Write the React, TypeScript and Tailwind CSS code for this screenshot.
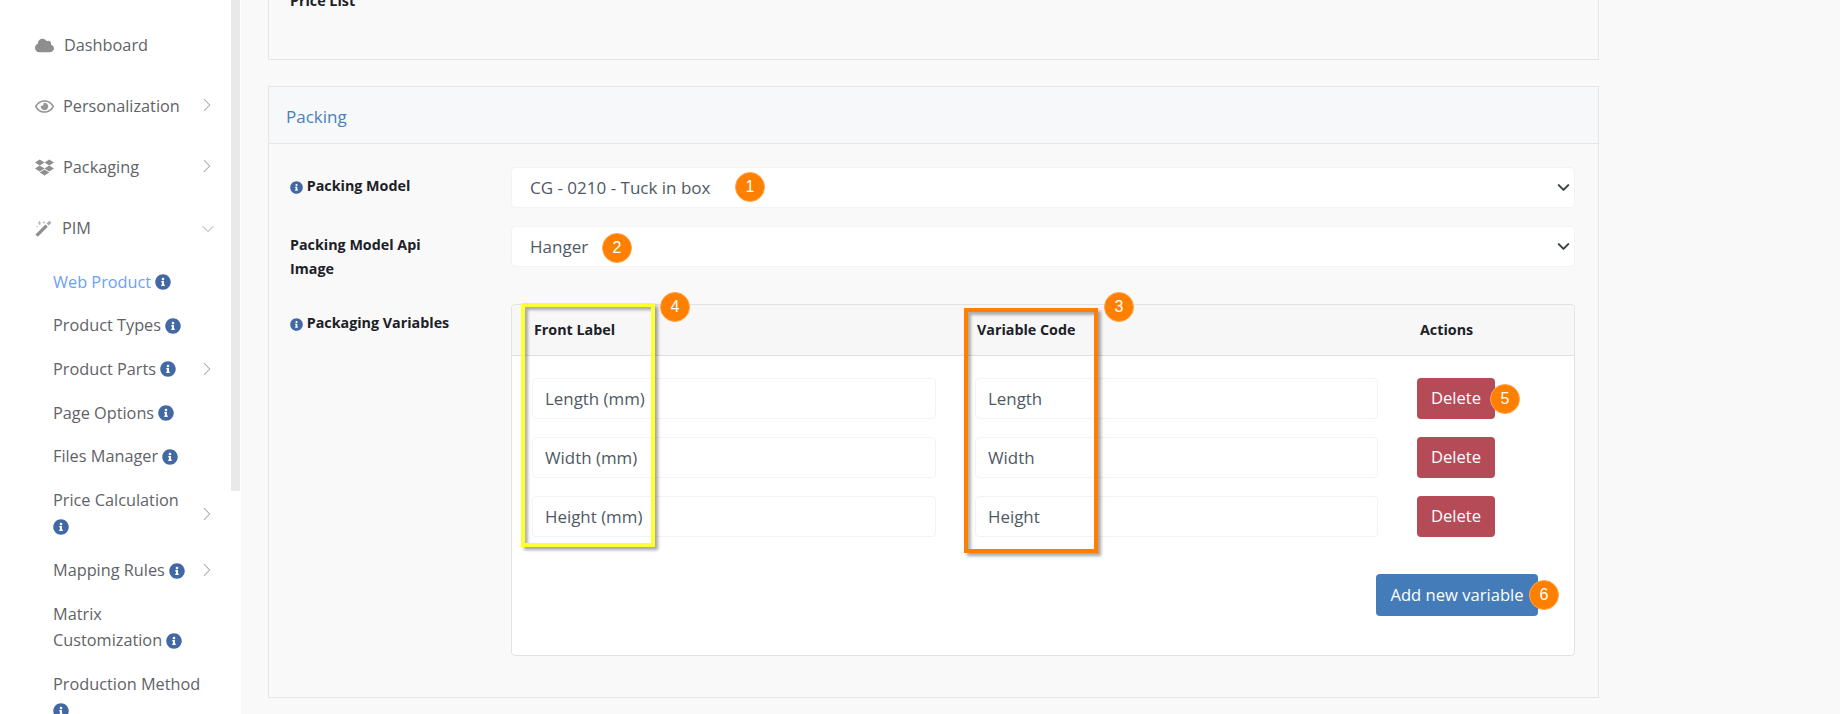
import { ReactNode } from "react";
import { FaCloud, FaRegEye, FaDropbox, FaInfoCircle } from "react-icons/fa";
import { ChevronRight, ChevronDown } from "lucide-react";

const Info = ({ className = "w-[16px] h-[16px]" }: { className?: string }) => (
  <FaInfoCircle className={`inline-block text-[#4368a6] align-[-2.5px] ${className}`} />
);

const WandIcon = () => (
  <svg viewBox="0 0 17 17" className="w-[17px] h-[17px]">
    <path d="M1.6 15.6 11.6 5.6" stroke="#8e8e8e" strokeWidth="3.2" fill="none" />
    <path d="M12.6 4.6 15.4 1.8" stroke="#a8a8a8" strokeWidth="2.8" fill="none" />
    <path d="M4.5 1v4M2.5 3h4M9 1.5v2M8 2.5h2M1.5 6.5h1.5" stroke="#b5b5b5" strokeWidth="0.9" fill="none" />
  </svg>
);

const MainItem = ({ icon, label, arrow, iconWidth }: { icon: ReactNode; label: string; arrow?: "right" | "down"; iconWidth: string }) => (
  <div className="flex items-center h-[61px] pl-[35px] pr-[13px] text-[#5f6368]">
    <span className={`text-[#8e8e8e] text-[19px] flex justify-start ${iconWidth}`}>{icon}</span>
    <span className="flex-1">{label}</span>
    {arrow === "right" && <ChevronRight className="w-[22px] h-[22px] text-[#a0a0a0] -translate-y-[2px]" strokeWidth={1.1} />}
    {arrow === "down" && <ChevronDown className="w-[20px] h-[20px] text-[#a0a0a0]" strokeWidth={1.2} />}
  </div>
);

const SubItem = ({ children, arrow, active }: { children: ReactNode; arrow?: boolean; active?: boolean }) => (
  <div className={`flex items-center py-[8.6px] pl-[53px] pr-[13px] leading-[26.5px] ${active ? "text-[#6b9fff]" : "text-[#5f6368]"}`}>
    <span className="flex-1">{children}</span>
    {arrow && <ChevronRight className="w-[22px] h-[22px] text-[#a0a0a0] shrink-0" strokeWidth={1.1} />}
  </div>
);

const Sidebar = () => (
  <aside className="w-[241px] shrink-0 bg-white text-[16.3px] relative">
    <div className="pt-[15px] pr-[10px]">
      <MainItem icon={<FaCloud />} label="Dashboard" iconWidth="w-[29px]" />
      <MainItem icon={<FaRegEye className="text-[#969696]" />} label="Personalization" arrow="right" iconWidth="w-[28px]" />
      <MainItem icon={<FaDropbox />} label="Packaging" arrow="right" iconWidth="w-[28px]" />
      <MainItem icon={<WandIcon />} label="PIM" arrow="down" iconWidth="w-[27px]" />
      <div className="mt-[1px]">
        <SubItem active>Web Product <Info /></SubItem>
        <SubItem>Product Types <Info /></SubItem>
        <SubItem arrow>Product Parts <Info /></SubItem>
        <SubItem>Page Options <Info /></SubItem>
        <SubItem>Files Manager <Info /></SubItem>
        <SubItem arrow>Price Calculation <Info /></SubItem>
        <SubItem arrow>Mapping Rules <Info /></SubItem>
        <SubItem>Matrix<br />Customization <Info /></SubItem>
        <SubItem>Production Method <Info /></SubItem>
      </div>
    </div>
    <div className="absolute left-[231px] top-0 w-[9px] h-[491px] bg-[#e9e9e9]" />
  </aside>
);

const Field = ({ value }: { value: string }) => (
  <input
    readOnly
    defaultValue={value}
    className="h-[41px] w-full bg-white border border-[#f3f3f3] rounded-[4px] px-[12px] text-[16.9px] text-[#4f5964] outline-none"
  />
);

const SelectBox = ({ value }: { value: string }) => (
  <div className="h-[41px] flex items-center justify-between bg-white border border-[#f3f3f3] rounded-[4px] pl-[18px] pr-[1px] text-[17px] text-[#4f5964]">
    <span>{value}</span>
    <ChevronDown className="w-[19px] h-[19px] text-[#3b4046]" strokeWidth={2.6} />
  </div>
);

const Label = ({ children }: { children: ReactNode }) => (
  <div className="text-[14.3px] font-bold leading-[23.5px] text-[#1c2128]">{children}</div>
);

const rows = [
  ["Length (mm)", "Length"],
  ["Width (mm)", "Width"],
  ["Height (mm)", "Height"],
];

const VariablesTable = () => (
  <div className="h-[352px] bg-white border border-[#e1e2e4] rounded-[4px] flex flex-col">
    <div className="h-[51px] shrink-0 bg-[#f7f7f7] border-b border-[#dfdfdf] rounded-t-[4px] grid grid-cols-[443px_443px_1fr] items-center pl-[22px] text-[14.3px] font-bold text-[#1c2128]">
      <span>Front Label</span>
      <span>Variable Code</span>
      <span>Actions</span>
    </div>
    <div className="pl-[20px] pr-[36px] pt-[22px]">
      <div className="flex flex-col gap-[18px]">
        {rows.map(([front, code]) => (
          <div key={code} className="grid grid-cols-[404px_403px_1fr] gap-x-[39px]">
            <Field value={front} />
            <Field value={code} />
            <div>
              <button className="h-[41px] w-[78px] bg-[#b64b58] rounded-[4px] text-[16.6px] text-white">Delete</button>
            </div>
          </div>
        ))}
      </div>
      <div className="flex justify-end mt-[37px]">
        <button className="h-[42px] w-[162px] bg-[#447cb9] rounded-[4px] text-[16.6px] text-white">Add new variable</button>
      </div>
    </div>
  </div>
);

const Badge = ({ n, className }: { n: number; className: string }) => (
  <div className={`absolute w-[30px] h-[30px] rounded-full bg-[#ff7f00] border border-[#ffa64d] flex items-center justify-center font-['Liberation_Sans',sans-serif] text-[16px] text-white ${className}`}>
    {n}
  </div>
);

const Highlight = ({ className }: { className: string }) => (
  <div className={`absolute border-[4px] shadow-[3px_3px_3px_rgba(0,0,0,0.35),inset_3px_3px_3px_rgba(0,0,0,0.3)] ${className}`} />
);

export default function App() {
  return (
    <div className="relative flex h-[714px] w-[1840px] overflow-hidden bg-[#f9f9f9] font-['Open_Sans',sans-serif]">
      <Sidebar />
      <main className="flex-1 pl-[27px]">
        <div className="w-[1331px] h-[60px] border-x border-b border-[#e4e6ea] overflow-hidden">
          <div className="pl-[21px] -mt-[11px] text-[14.3px] font-bold leading-[23px] text-[#1c2128]">Price List</div>
        </div>
        <section className="w-[1331px] h-[612px] mt-[26px] border border-[#e4e6ea]">
          <div className="h-[57px] flex items-center pl-[17px] pt-[4px] bg-[#f7f8fa] border-b border-[#e4e6ea] text-[17px] text-[#4a80bd]">Packing</div>
          <div className="pt-[23px] pl-[21px] pr-[23px] grid grid-cols-[221px_1fr] grid-rows-[41px_41px_auto] gap-y-[18px]">
            <div className="pt-[7px]"><Label><Info className="w-[13px] h-[13px]" /> Packing Model</Label></div>
            <SelectBox value="CG - 0210 - Tuck in box" />
            <div className="pt-[7px] pr-[50px]"><Label>Packing Model Api Image</Label></div>
            <SelectBox value="Hanger" />
            <div className="mt-[19px] pt-[7px]"><Label><Info className="w-[13px] h-[13px]" /> Packaging Variables</Label></div>
            <div className="mt-[19px]"><VariablesTable /></div>
          </div>
        </section>
      </main>

      <Highlight className="left-[521px] top-[303px] w-[134px] h-[244px] border-[#ffff33]" />
      <Highlight className="left-[964px] top-[308px] w-[134px] h-[245px] border-[#ff7f00]" />
      <Badge n={1} className="left-[735px] top-[172px]" />
      <Badge n={2} className="left-[602px] top-[233px]" />
      <Badge n={4} className="left-[660px] top-[292px]" />
      <Badge n={3} className="left-[1104px] top-[292px]" />
      <Badge n={5} className="left-[1490px] top-[384px]" />
      <Badge n={6} className="left-[1529px] top-[580px]" />
    </div>
  );
}
